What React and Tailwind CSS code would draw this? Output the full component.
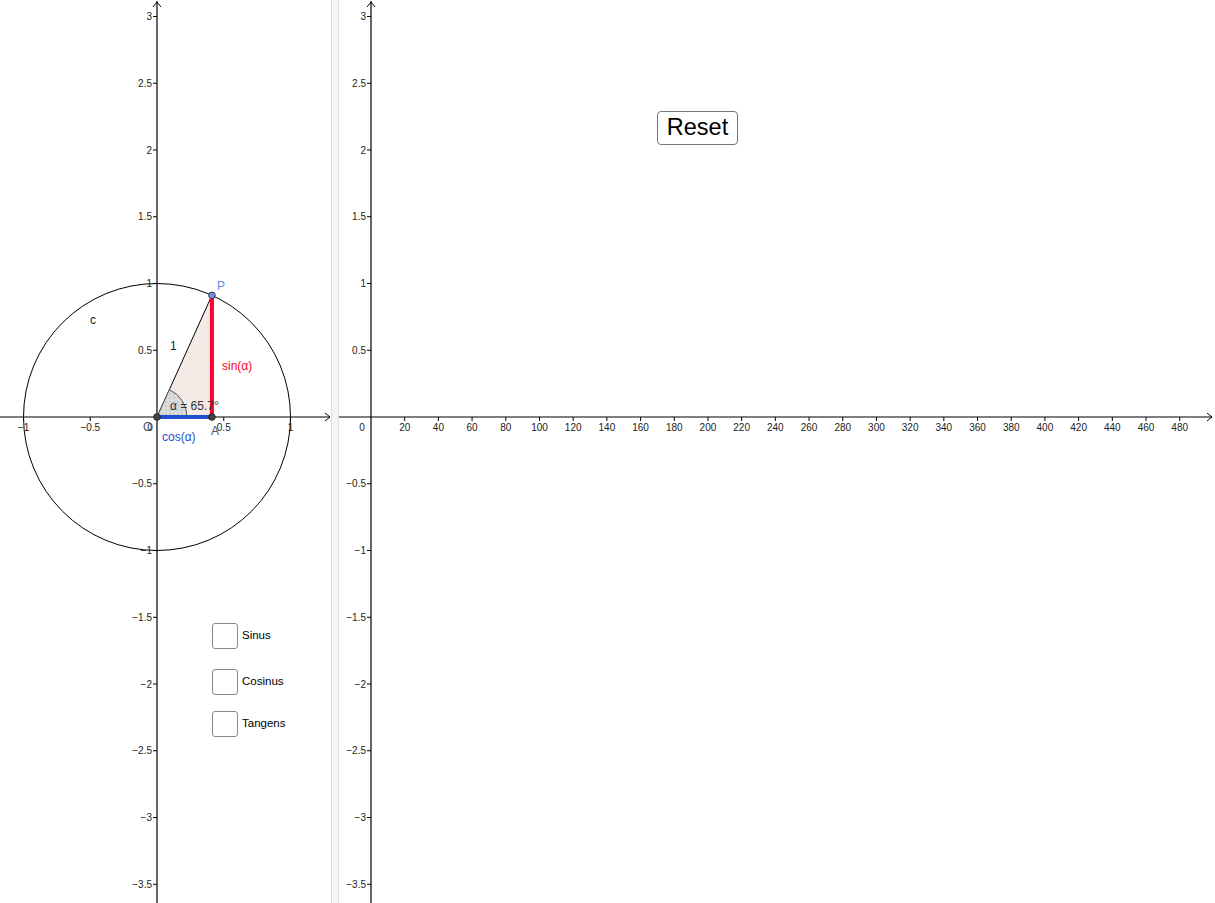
import React from "react";

const FONT = { fontFamily: '"Liberation Sans", Arial, sans-serif' };
const U = 133.5; // px per unit on y (both views) and x (left view)
const OY = 417;
const LX = 157; // left origin x
const RX = 32; // right origin x (inside right view)
const RSX = 1.6848; // right view px per unit on x

const fmt = (v) => (v < 0 ? "\u2212" + String(-v) : String(v));

const yTicks = [];
for (let v = 3; v >= -3.5; v -= 0.5) if (v !== 0) yTicks.push(v);

const rxTicks = [];
for (let v = 20; v <= 480; v += 20) rxTicks.push(v);

function YAxis({ x, h }) {
  return (
    <g>
      <line x1={x} y1={1} x2={x} y2={h} stroke="#000" strokeWidth="1.2" />
      <path d={`M${x - 4} 7 L${x} 2 L${x + 4} 7`} fill="none" stroke="#000" strokeWidth="1" />
      {yTicks.map((v) => {
        const y = OY - v * U;
        return (
          <g key={v}>
            <line x1={x - 4} y1={y} x2={x} y2={y} stroke="#000" strokeWidth="1" />
            <text x={x - 5} y={y + 3.5} textAnchor="end" fontSize="10" fill="#222">
              {fmt(v)}
            </text>
          </g>
        );
      })}
    </g>
  );
}

function LeftView() {
  const a = (65.7 * Math.PI) / 180;
  const px = LX + Math.cos(a) * U;
  const py = OY - Math.sin(a) * U;
  const r = 30;
  const ax = LX + Math.cos(a) * r;
  const ay = OY - Math.sin(a) * r;
  return (
    <svg width="331" height="903" style={FONT} className="block">
      <defs>
        <pattern id="dots" width="4" height="4" patternUnits="userSpaceOnUse">
          <rect width="4" height="4" fill="#dcdcdc" />
          <circle cx="2" cy="2" r="0.6" fill="#9a9a9a" />
        </pattern>
      </defs>
      {/* x axis */}
      <line x1="0" y1={OY} x2="330" y2={OY} stroke="#000" strokeWidth="1.2" />
      <path d={`M325 ${OY - 4} L330 ${OY} L325 ${OY + 4}`} fill="none" stroke="#000" strokeWidth="1" />
      {[-1, -0.5, 0.5, 1].map((v) => {
        const x = LX + v * U;
        return (
          <g key={v}>
            <line x1={x} y1={OY} x2={x} y2={OY + 4} stroke="#000" strokeWidth="1" />
            <text x={x} y={OY + 14} textAnchor="middle" fontSize="10" fill="#222">
              {fmt(v)}
            </text>
          </g>
        );
      })}
      <text x={LX - 7} y={OY + 14} textAnchor="middle" fontSize="10" fill="#222">0</text>
      <YAxis x={LX} h={903} />

      {/* circle c */}
      <circle cx={LX} cy={OY} r={U} fill="none" stroke="#000" strokeWidth="1" />

      {/* triangle */}
      <polygon points={`${LX},${OY} ${px},${py} ${px},${OY}`} fill="#f4ebe6" />
      <line x1={LX} y1={OY} x2={px} y2={py} stroke="#000" strokeWidth="1" />

      {/* angle */}
      <path
        d={`M${LX} ${OY} L${LX + r} ${OY} A${r} ${r} 0 0 0 ${ax} ${ay} Z`}
        fill="url(#dots)"
        stroke="#555"
        strokeWidth="1"
      />

      {/* sin / cos */}
      <line x1={px} y1={py} x2={px} y2={OY} stroke="#ff0033" strokeWidth="4" />
      <line x1={LX} y1={OY} x2={px} y2={OY} stroke="#1f4fd1" strokeWidth="4" />

      {/* points */}
      <circle cx={LX} cy={OY} r="3.3" fill="#444" stroke="#222" strokeWidth="1" />
      <circle cx={px} cy={OY} r="3.3" fill="#444" stroke="#222" strokeWidth="1" />
      <circle cx={px} cy={py} r="3.3" fill="#7090e8" stroke="#334" strokeWidth="1" />

      {/* labels */}
      <text x={217} y={290} fontSize="12" fill="#6a84e6">P</text>
      <text x={90} y={324} fontSize="12" fill="#222">c</text>
      <text x={170} y={350} fontSize="12" fill="#222">1</text>
      <text x={222} y={370} fontSize="12" fill="#ff0033">sin(α)</text>
      <text x={170} y={410} fontSize="12" fill="#333">α = 65.7°</text>
      <text x={162} y={441} fontSize="12" fill="#1f4fd1">cos(α)</text>
      <text x={211} y={435} fontSize="12" fill="#555">A</text>
      <text x={143} y={431} fontSize="12" fill="#555">O</text>
    </svg>
  );
}

function RightView() {
  return (
    <svg width="876" height="903" style={FONT} className="block">
      <line x1="0" y1={OY} x2="873" y2={OY} stroke="#000" strokeWidth="1.2" />
      <path d={`M868 ${OY - 4} L873 ${OY} L868 ${OY + 4}`} fill="none" stroke="#000" strokeWidth="1" />
      {rxTicks.map((v) => {
        const x = RX + v * RSX;
        return (
          <g key={v}>
            <line x1={x} y1={OY} x2={x} y2={OY + 4} stroke="#000" strokeWidth="1" />
            <text x={x} y={OY + 14} textAnchor="middle" fontSize="10" fill="#222">
              {v}
            </text>
          </g>
        );
      })}
      <text x={RX - 9} y={OY + 14} textAnchor="middle" fontSize="10" fill="#222">0</text>
      <YAxis x={RX} h={903} />
    </svg>
  );
}

function Check({ label }) {
  return (
    <label className="flex items-center gap-[4px] cursor-pointer">
      <span className="w-[26px] h-[26px] rounded-[3px] border border-[#8a8a8a] bg-white" />
      <span className="text-[11.5px] text-black">{label}</span>
    </label>
  );
}

export default function App() {
  return (
    <div className="w-[1215px] h-[903px] flex bg-white overflow-hidden" style={FONT}>
      <div className="relative w-[331px] h-full">
        <LeftView />
        <div className="absolute left-[212px] top-[623px] flex flex-col">
          <Check label="Sinus" />
          <div className="h-[20px]" />
          <Check label="Cosinus" />
          <div className="h-[16px]" />
          <Check label="Tangens" />
        </div>
      </div>
      <div className="w-[8px] h-full bg-[#f4f4f4] border-l border-r border-[#dedede]" />
      <div className="relative flex-1 h-full">
        <RightView />
        <button className="absolute left-[318px] top-[111px] w-[81px] h-[34px] rounded-[4px] border border-[#777] bg-white text-[23.5px] leading-none text-black">
          Reset
        </button>
      </div>
    </div>
  );
}
